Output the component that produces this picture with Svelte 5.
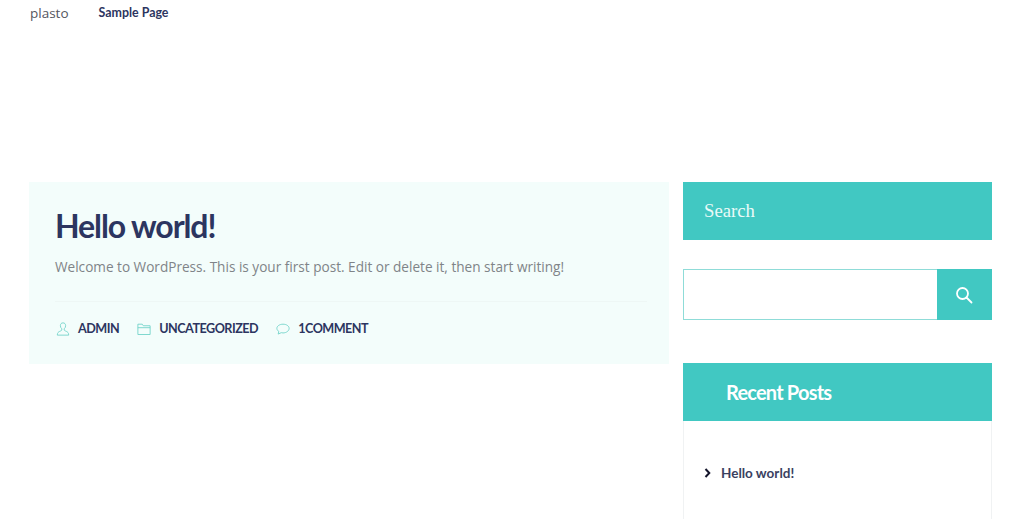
<script>
  // blog index: one post card and the sidebar widgets
  const meta = [
    { icon: "user", label: "ADMIN" },
    { icon: "folder", label: "UNCATEGORIZED" },
    { icon: "comment", label: "1 COMMENT" }
  ];
</script>

<header class="top">
  <span class="brand">plasto</span>
  <a class="nav-link" href="#top">Sample Page</a>
</header>

<main class="layout">
  <article class="post">
    <h1>Hello world!</h1>
    <p class="excerpt">Welcome to WordPress. This is your first post. Edit or delete it, then start writing!</p>
    <ul class="meta">
      {#each meta as item}
        <li>
          <svg viewBox="0 0 16 16" width="14" height="14" fill="none" stroke="#6fd2c8" stroke-width="1">
            {#if item.icon === "user"}
              <path d="M8 1c-2 0-3 1.400-3 3.200 0 1.500.7 2.800 1.600 3.500v1.400c0 .6-1 1-2.400 1.600C2.800 11.300 1.500 12.300 1.500 15h13c0-2.700-1.300-3.700-2.700-4.300-1.400-.6-2.400-1-2.400-1.600V7.700c.9-.7 1.600-2 1.600-3.500C11 2.400 10 1 8 1z" />
            {:else if item.icon === "folder"}
              <path d="M1 2.500h5l1.200 1.800H15v10H1zM1 6.500h14" />
            {:else}
              <path d="M8 2.500c-3.800 0-7 2.100-7 4.800 0 1.400.9 2.700 2.200 3.500l-.7 3 3.500-1.600c.6.200 1.300.3 2 .3 3.800 0 7-2.400 7-5.200S11.800 2.500 8 2.500z" />
            {/if}
          </svg>
          <span>{item.label}</span>
        </li>
      {/each}
    </ul>
  </article>

  <aside class="sidebar">
    <section class="widget-search">
      <h2 class="serif-title">Search</h2>
      <form class="search" onsubmit={(e) => e.preventDefault()}>
        <input type="text" aria-label="Search" />
        <button type="submit" aria-label="Search">
          <svg viewBox="0 0 18 18" width="18" height="18" fill="none" stroke="#fff" stroke-width="1.800">
            <circle cx="7.500" cy="7.500" r="5.500" />
            <path d="M11.500 11.500l5 5" stroke-linecap="round" />
          </svg>
        </button>
      </form>
    </section>

    <section class="recent">
      <h2>Recent Posts</h2>
      <ul>
        <li>
          <svg viewBox="0 0 8 10" width="8" height="10" fill="none" stroke="#14152b" stroke-width="2">
            <path d="M1.500 1l3.800 4-3.800 4" />
          </svg>
          <a href="#top">Hello world!</a>
        </li>
      </ul>
    </section>
  </aside>
</main>

<style>
  :global(body) {
    background: #fff;
    overflow: hidden;
  }

  .top {
    display: flex;
    align-items: center;
    gap: 30px;
    height: 25px;
    padding-left: 30px;
    font-family: "Lato", sans-serif;
  }

  .brand {
    font-family: "Open Sans", sans-serif;
    font-size: 13.500px;
    color: #55565f;
  }

  .nav-link {
    font-size: 12.400px;
    font-weight: 700;
    color: #2c3560;
    text-decoration: none;
  }

  .layout {
    display: flex;
    align-items: flex-start;
    gap: 14px;
    padding: 157px 31px 0 29px;
  }

  .post {
    box-sizing: border-box;
    width: 640px;
    height: 182px;
    padding: 24px 22px 0 26px;
    background: #f3fdfb;
  }

  h1 {
    margin: 0;
    font-family: "Lato", sans-serif;
    font-size: 32px;
    line-height: 39px;
    font-weight: 700;
    letter-spacing: -1.100px;
    color: #2c3560;
  }

  .excerpt {
    margin: 12px 0 0;
    padding-bottom: 25px;
    border-bottom: 1px solid #eef7f5;
    font-family: "Open Sans", sans-serif;
    font-size: 13.600px;
    line-height: 19px;
    color: #7f8488;
  }

  .meta {
    display: flex;
    gap: 18px;
    margin: 19px 0 0 1px;
    padding: 0;
    list-style: none;
  }

  .meta li {
    display: flex;
    align-items: center;
    gap: 8px;
    font-family: "Lato", sans-serif;
    font-size: 12.600px;
    font-weight: 700;
    letter-spacing: -0.500px;
    word-spacing: -2.500px;
    color: #2c3560;
  }

  .sidebar {
    width: 309px;
    flex: none;
  }

  .serif-title {
    box-sizing: border-box;
    height: 58px;
    margin: 0;
    padding-left: 21px;
    background: #41c8c2;
    font-family: "Liberation Serif", serif;
    font-size: 18.700px;
    font-weight: 400;
    line-height: 58px;
    color: #eafaf8;
  }

  .search {
    display: flex;
    height: 51px;
    margin-top: 29px;
  }

  .search input {
    box-sizing: border-box;
    flex: 1;
    min-width: 0;
    padding: 0;
    border: 1px solid #8fdcd8;
    border-right: 0;
    border-radius: 0;
    outline: 0;
    background: #fff;
  }

  .search button {
    display: flex;
    align-items: center;
    justify-content: center;
    width: 55px;
    padding: 0 2px 0 0;
    border: 0;
    background: #41c8c2;
  }

  .recent {
    margin-top: 43px;
    height: 200px;
    border: 1px solid #f0f2f3;
    border-top: 0;
  }

  .recent h2 {
    height: 58px;
    margin: 0 -1px;
    padding-left: 43px;
    background: #41c8c2;
    font-family: "Lato", sans-serif;
    font-size: 20px;
    font-weight: 700;
    letter-spacing: -0.800px;
    line-height: 58px;
    color: #fff;
  }

  .recent ul {
    margin: 0;
    padding: 44px 0 0 20px;
    list-style: none;
  }

  .recent li {
    display: flex;
    align-items: center;
    gap: 9px;
  }

  .recent a {
    font-family: "Lato", sans-serif;
    font-size: 13.500px;
    font-weight: 700;
    color: #3a3f5f;
    text-decoration: none;
  }
</style>
